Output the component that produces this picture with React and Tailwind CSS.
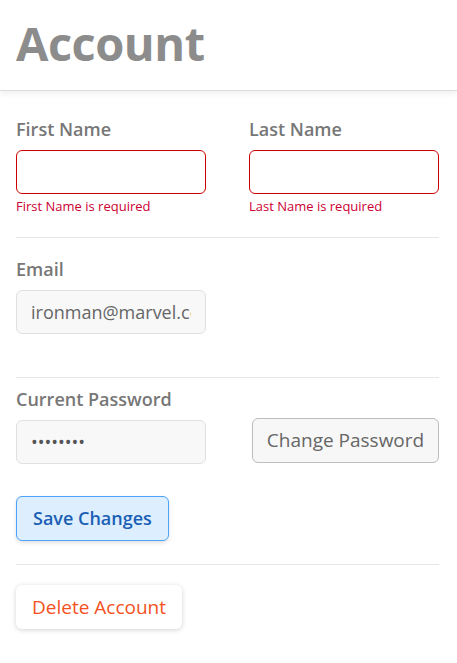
export default function App() {
  return (
    <div className="min-h-screen w-[457px] bg-white font-['Open_Sans',sans-serif]">
      <header className="h-[91px] border-b border-[#dcdcdc] shadow-[0_3px_6px_rgba(0,0,0,0.06)] px-[16px] flex items-center">
        <h1 className="text-[47px] leading-none font-bold text-[#8c8c8c] tracking-[-0.5px] -mt-[4px]">Account</h1>
      </header>

      <main className="pl-[16px] pr-[18px] pt-[26px]">
        <div className="flex justify-between">
          <div className="w-[190px]">
            <label className="block text-[18px] leading-[24px] font-semibold text-[#777]">First Name</label>
            <input className="mt-[9px] block w-full h-[44px] rounded-[6px] border border-[#cc0000] bg-white px-[14px] outline-none" />
            <p className="mt-[4px] text-[13px] leading-[17px] text-[#cc0033]">First Name is required</p>
          </div>
          <div className="w-[190px]">
            <label className="block text-[18px] leading-[24px] font-semibold text-[#777]">Last Name</label>
            <input className="mt-[9px] block w-full h-[44px] rounded-[6px] border border-[#cc0000] bg-white px-[14px] outline-none" />
            <p className="mt-[4px] text-[13px] leading-[17px] text-[#cc0033]">Last Name is required</p>
          </div>
        </div>

        <hr className="mt-[22px] border-t border-[#e6e6e6]" />

        <div className="mt-[19px]">
          <label className="block text-[18px] leading-[24px] font-semibold text-[#777]">Email</label>
          <input
            readOnly
            value="ironman@marvel.com"
            className="mt-[9px] block w-[190px] h-[44px] rounded-[6px] border border-[#e0e0e0] bg-[#f8f8f8] px-[14px] text-[18px] text-[#666] outline-none"
          />
        </div>

        <hr className="mt-[43px] border-t border-[#e6e6e6]" />

        <div className="mt-[9px]">
          <label className="block text-[18px] leading-[24px] font-semibold text-[#777]">Current Password</label>
          <div className="mt-[7px] flex items-start justify-between">
            <input
              readOnly
              type="password"
              value="password"
              className="mt-[2px] block w-[190px] h-[44px] rounded-[6px] border border-[#e0e0e0] bg-[#f8f8f8] px-[14px] text-[18px] text-[#555] outline-none"
            />
            <button className="w-[187px] h-[45px] rounded-[6px] border border-[#bdbdbd] bg-[#f7f7f7] text-[19px] text-[#666]">
              Change Password
            </button>
          </div>
        </div>

        <button className="mt-[32px] h-[45px] px-[16px] rounded-[6px] border border-[#4da3f5] bg-[#ddeeff] text-[18px] font-semibold text-[#1a5fb4] shadow-[0_2px_4px_rgba(0,0,0,0.12)]">
          Save Changes
        </button>

        <hr className="mt-[23px] border-t border-[#e6e6e6]" />

        <button className="mt-[20px] h-[44px] px-[16px] rounded-[6px] bg-white text-[19px] text-[#f4511e] shadow-[0_1px_5px_rgba(0,0,0,0.18)]">
          Delete Account
        </button>
      </main>
    </div>
  );
}
